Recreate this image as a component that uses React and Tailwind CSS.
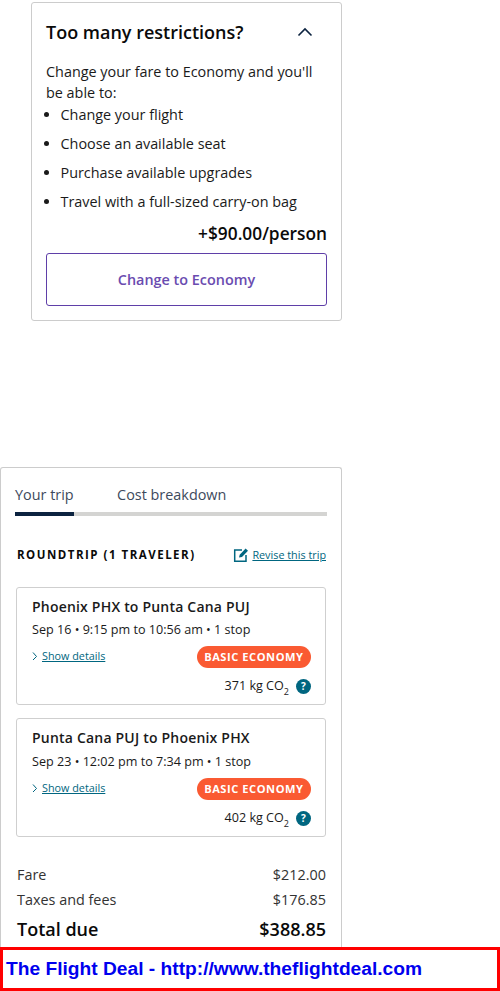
const font = { fontFamily: '"Open Sans", sans-serif' };

function Segment({ title, time, co2, timeClass, heightClass }) {
  return (
    <div className={`border border-[#cfcfcf] rounded-[3px] pl-[15px] pr-[14px] pt-[9px] ${heightClass}`}>
      <div className="text-[14px] leading-[20px] font-semibold text-[#1a1a1a] tracking-[0.2px]">{title}</div>
      <div className={`text-[12.6px] leading-[20px] text-[#1a1a1a] ${timeClass}`}>{time}</div>
      <div className="flex justify-between items-start mt-[6px]">
        <div className="flex items-center gap-[4px] mt-[3px]">
          <svg width="6" height="10" viewBox="0 0 6 10" fill="none" stroke="#006680" strokeWidth="1">
            <path d="M1 1.5 4.5 5.5 1 9" />
          </svg>
          <a className="text-[10.8px] leading-[14px] text-[#006680] underline">Show details</a>
        </div>
        <span className="h-[22px] px-[7.5px] rounded-full bg-[#fa5a32] text-white text-[11.1px] font-bold tracking-[0.55px] leading-[22px]">BASIC ECONOMY</span>
      </div>
      <div className="flex justify-end items-center mt-[10px] text-[12.6px] leading-[16px] text-[#1a1a1a]">
        <span>{co2} kg CO<sub className="text-[9px] align-[-3px] leading-none">2</sub></span>
        <span className="ml-[7px] w-[15px] h-[15px] rounded-full bg-[#006680] text-white text-[10px] font-bold leading-[15px] text-center">?</span>
      </div>
    </div>
  );
}

export default function App() {
  return (
    <div className="relative w-[500px] h-[991px] bg-white overflow-hidden flex flex-col" style={font}>
      <section className="ml-[31px] mt-[2px] w-[311px] h-[319px] shrink-0 border border-[#cccccc] rounded-[3px] px-[14px] pt-[15px] text-[#1a1a1a]">
        <div className="flex items-center justify-between pr-[14px] h-[28px]">
          <h2 className="text-[18px] leading-[28px] font-semibold text-[#0a0a0a]">Too many restrictions?</h2>
          <svg width="16" height="10" viewBox="0 0 16 10" fill="none" stroke="#0c2340" strokeWidth="1.6">
            <path d="M1.5 8.5 8 2l6.5 6.5" />
          </svg>
        </div>
        <p className="mt-[15px] text-[14.4px] leading-[21px]">Change your fare to Economy and you'll be able to:</p>
        <ul className="list-disc pl-[14.5px] text-[14.4px] leading-[21px]">
          <li className="mt-[1px]">Change your flight</li>
          <li className="mt-[8px]">Choose an available seat</li>
          <li className="mt-[8px]">Purchase available upgrades</li>
          <li className="mt-[8px]">Travel with a full-sized carry-on bag</li>
        </ul>
        <div className="mt-[11px] text-right text-[17.3px] leading-[22px] font-semibold text-[#0a0a0a]">+$90.00/person</div>
        <button className="mt-[8px] w-full h-[53px] border border-[#5f3fa8] rounded-[3px] text-[14.4px] font-semibold text-[#6a4cb0]">Change to Economy</button>
      </section>

      <section className="mt-[146px] w-[342px] flex-1 min-h-0 border border-b-0 border-[#cccccc] rounded-t-[3px] px-[14px] pt-[16px] text-[#1a1a1a]">
        <div className="flex gap-[43.5px] text-[14.4px] leading-[22px] text-[#3d4a5c]">
          <span>Your trip</span>
          <span>Cost breakdown</span>
        </div>
        <div className="mt-[6px] h-[4px] w-[312px] bg-[#d4d4d2]">
          <div className="h-full w-[59px] bg-[#0c2340]" />
        </div>
        <div className="mt-[30px] flex justify-between items-center pl-[2px] pr-[1px] h-[18px]">
          <span className="text-[11.5px] font-bold tracking-[1.5px] text-[#0a0a0a]">ROUNDTRIP (1 TRAVELER)</span>
          <span className="flex items-center gap-[3px]">
            <svg width="16" height="16" viewBox="0 0 16 16" fill="none">
              <path d="M9 3H1.7v11.3H13V8" stroke="#006680" strokeWidth="1.5" />
              <path d="M6 10.5 6.7 7.8 12.6 1.6 15 3.8 9 10z" fill="#006680" />
            </svg>
            <a className="text-[10.8px] leading-[14px] text-[#006680] underline">Revise this trip</a>
          </span>
        </div>
        <div className="mt-[23px] ml-[1px] w-[310px] flex flex-col gap-[13px]">
          <Segment title="Phoenix PHX to Punta Cana PUJ" time="Sep 16 • 9:15 pm to 10:56 am • 1 stop" co2="371" timeClass="mt-[3px]" heightClass="h-[118px]" />
          <Segment title="Punta Cana PUJ to Phoenix PHX" time="Sep 23 • 12:02 pm to 7:34 pm • 1 stop" co2="402" timeClass="mt-[4px]" heightClass="h-[119px]" />
        </div>
        <div className="mt-[27px] ml-[2px] w-[309px] text-[14.4px] leading-[22px] text-[#333333]">
          <div className="flex justify-between"><span>Fare</span><span>$212.00</span></div>
          <div className="flex justify-between mt-[3px]"><span>Taxes and fees</span><span>$176.85</span></div>
          <div className="flex justify-between mt-[5px] text-[18px] leading-[26px] font-semibold text-[#0a0a0a]"><span>Total due</span><span>$388.85</span></div>
        </div>
      </section>

      <div
        className="absolute left-0 top-[947px] w-[500px] h-[44px] border-[3px] border-[#ff0000] bg-white pl-[3px] text-[19.2px] leading-[38px] font-bold text-[#0000ee]"
        style={{ fontFamily: '"Liberation Sans", Arial, sans-serif' }}
      >
        The Flight Deal - http://www.theflightdeal.com
      </div>
    </div>
  );
}
